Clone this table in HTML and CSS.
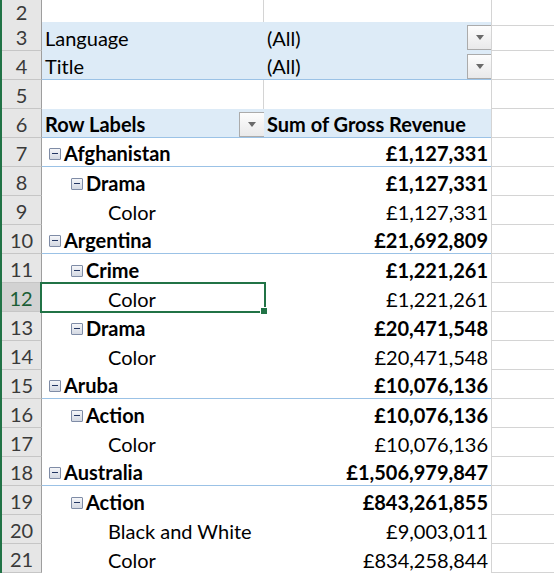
FILE: index.html
```html
<!DOCTYPE html>
<html>
<head>
<meta charset="utf-8">
<link rel="stylesheet" href="styles.css">
</head>
<body>
<div class="sheet">
  <div class="row row-top">
    <div class="rh">2</div><div class="c a grid"></div><div class="c b grid"></div><div class="c x"></div>
  </div>
  <div class="row">
    <div class="rh">3</div><div class="c a fill">Language</div><div class="c b fill">(All)<span class="dd dd-filter"><svg width="8" height="5" viewBox="0 0 8 5"><path d="M0 0H8L4 5Z" fill="#6a6a6a"/></svg></span></div><div class="c x"></div>
  </div>
  <div class="row">
    <div class="rh">4</div><div class="c a fill bl">Title</div><div class="c b fill bl">(All)<span class="dd dd-filter"><svg width="8" height="5" viewBox="0 0 8 5"><path d="M0 0H8L4 5Z" fill="#6a6a6a"/></svg></span></div><div class="c x"></div>
  </div>
  <div class="row">
    <div class="rh">5</div><div class="c a grid"></div><div class="c b grid"></div><div class="c x"></div>
  </div>
  <div class="row">
    <div class="rh">6</div><div class="c a fill bl bold">Row Labels<span class="dd dd-head"><svg width="8" height="5" viewBox="0 0 8 5"><path d="M0 0H8L4 5Z" fill="#6a6a6a"/></svg></span></div><div class="c b fill bl bold">Sum of Gross Revenue</div><div class="c x"></div>
  </div>

  <div class="row">
    <div class="rh">7</div><div class="c a pv bl bold l1"><span class="tog"></span>Afghanistan</div><div class="c b pv bl bold num">£1,127,331</div><div class="c x"></div>
  </div>
  <div class="row">
    <div class="rh">8</div><div class="c a pv bold l2"><span class="tog"></span>Drama</div><div class="c b pv bold num">£1,127,331</div><div class="c x"></div>
  </div>
  <div class="row">
    <div class="rh">9</div><div class="c a pv l3">Color</div><div class="c b pv num">£1,127,331</div><div class="c x"></div>
  </div>
  <div class="row">
    <div class="rh">10</div><div class="c a pv bl bold l1"><span class="tog"></span>Argentina</div><div class="c b pv bl bold num">£21,692,809</div><div class="c x"></div>
  </div>
  <div class="row">
    <div class="rh">11</div><div class="c a pv bold l2"><span class="tog"></span>Crime</div><div class="c b pv bold num">£1,221,261</div><div class="c x"></div>
  </div>
  <div class="row">
    <div class="rh rh-sel">12</div><div class="c a pv l3 sel">Color</div><div class="c b pv num">£1,221,261</div><div class="c x"></div>
  </div>
  <div class="row">
    <div class="rh">13</div><div class="c a pv bold l2"><span class="tog"></span>Drama</div><div class="c b pv bold num">£20,471,548</div><div class="c x"></div>
  </div>
  <div class="row">
    <div class="rh">14</div><div class="c a pv l3">Color</div><div class="c b pv num">£20,471,548</div><div class="c x"></div>
  </div>
  <div class="row">
    <div class="rh">15</div><div class="c a pv bl bold l1"><span class="tog"></span>Aruba</div><div class="c b pv bl bold num">£10,076,136</div><div class="c x"></div>
  </div>
  <div class="row">
    <div class="rh">16</div><div class="c a pv bold l2"><span class="tog"></span>Action</div><div class="c b pv bold num">£10,076,136</div><div class="c x"></div>
  </div>
  <div class="row">
    <div class="rh">17</div><div class="c a pv l3">Color</div><div class="c b pv num">£10,076,136</div><div class="c x"></div>
  </div>
  <div class="row">
    <div class="rh">18</div><div class="c a pv bl bold l1"><span class="tog"></span>Australia</div><div class="c b pv bl bold num">£1,506,979,847</div><div class="c x"></div>
  </div>
  <div class="row">
    <div class="rh">19</div><div class="c a pv bold l2"><span class="tog"></span>Action</div><div class="c b pv bold num">£843,261,855</div><div class="c x"></div>
  </div>
  <div class="row">
    <div class="rh">20</div><div class="c a pv l3">Black and White</div><div class="c b pv num">£9,003,011</div><div class="c x"></div>
  </div>
  <div class="row">
    <div class="rh">21</div><div class="c a pv l3">Color</div><div class="c b pv num">£834,258,844</div><div class="c x"></div>
  </div>
</div>
</body>
</html>
```

FILE: styles.css
```css
html, body {
  margin: 0;
  padding: 0;
  background: #ffffff;
  overflow: hidden;
}
body {
  font-family: Lato, "Open Sans", sans-serif;
  font-size: 20px;
  color: #000;
}
.sheet {
  width: 554px;
  height: 573px;
  border-left: 2px solid #217346;
  box-sizing: border-box;
  overflow: hidden;
}
.row {
  display: grid;
  grid-template-columns: 40px 222px 228px 1fr;
  height: 29px;
}
.row-top {
  height: 22px;
}
.rh {
  background: #e6e6e6;
  border-right: 1px solid #9e9e9e;
  border-bottom: 1px solid #c6c6c6;
  color: #3a3a3a;
  display: flex;
  align-items: flex-end;
  justify-content: center;
  padding-bottom: 1px;
  line-height: 24px;
  box-sizing: border-box;
}
.rh-sel {
  background: #d2d2d2;
  color: #1b5e35;
  border-right: 2px solid #217346;
}
.c {
  box-sizing: border-box;
  display: flex;
  align-items: flex-end;
  padding: 0 3px 1px 3px;
  line-height: 24px;
  white-space: nowrap;
  position: relative;
}
.grid {
  border-right: 1px solid #d4d4d4;
}
.x {
  border-left: 1px solid #d4d4d4;
  border-bottom: 1px solid #d4d4d4;
  margin-left: -1px;
}
.fill {
  background: #ddebf7;
}
.bl {
  border-bottom: 1px solid #9bc2e6;
}
.pv {
  background: #fff;
}
.bold {
  font-weight: 700;
}
.num {
  justify-content: flex-end;
  padding-right: 4px;
}
.l1 {
  padding-left: 7px;
}
.l2 {
  padding-left: 29px;
}
.l3 {
  padding-left: 66px;
}
.tog {
  width: 12px;
  height: 12px;
  box-sizing: border-box;
  border: 1px solid #7f8ca6;
  background: linear-gradient(#f5f6f9, #d3d8e2);
  border-radius: 1px;
  margin: 0 3px 5px 0;
  position: relative;
  flex: none;
}
.tog::after {
  content: "";
  position: absolute;
  left: 2px;
  right: 2px;
  top: 4px;
  height: 1px;
  background: #243763;
}
.dd {
  position: absolute;
  box-sizing: border-box;
  border: 1px solid #ababab;
  background: linear-gradient(#fdfdfd, #e9e9ea);
  display: flex;
  align-items: center;
  justify-content: center;
}
.dd-filter {
  width: 25px;
  height: 25px;
  right: 0;
  top: 3px;
}
.dd-head {
  width: 26px;
  height: 25px;
  right: -1px;
  top: 3px;
}
.sel {
  z-index: 3;
}
.sel::after {
  content: "";
  position: absolute;
  left: -2px;
  top: -1px;
  right: -2px;
  bottom: -1px;
  border: 2px solid #217346;
}
.sel::before {
  content: "";
  position: absolute;
  right: -4px;
  bottom: -3px;
  width: 6px;
  height: 6px;
  background: #217346;
  border: 1px solid #fff;
  z-index: 2;
}
```
